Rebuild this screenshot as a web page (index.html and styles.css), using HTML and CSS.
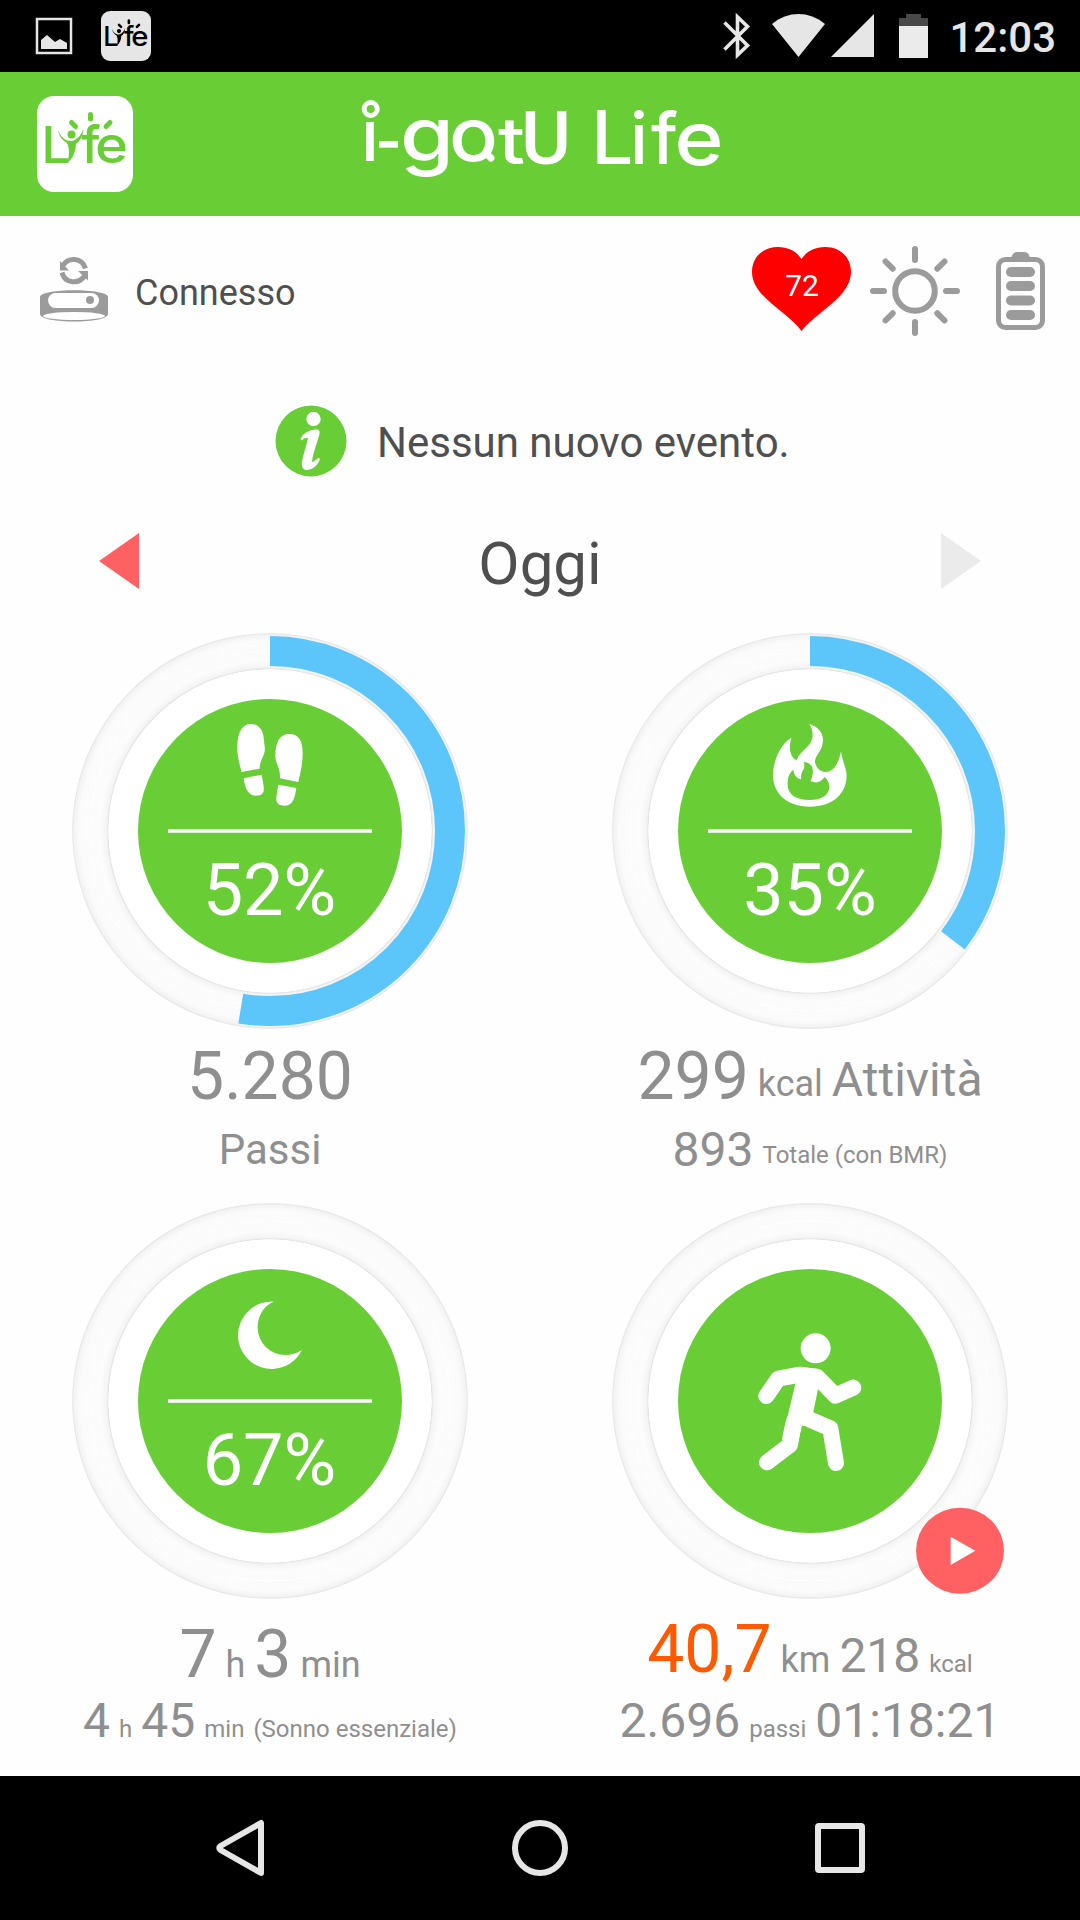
FILE: index.html
```html
<!DOCTYPE html>
<html lang="it">
<head>
    <meta charset="utf-8">
    <title>i-gotU Life</title>
    <link rel="stylesheet" href="styles.css">
</head>
<body>
    <svg class="defs" width="0" height="0">
        <defs>
            <radialGradient id="track" gradientUnits="userSpaceOnUse" cx="198" cy="198" r="198">
                <stop offset="0.814" stop-color="#fefefe"/>
                <stop offset="0.818" stop-color="#e3e3e3"/>
                <stop offset="0.826" stop-color="#f4f4f4"/>
                <stop offset="0.86" stop-color="#fcfcfc"/>
                <stop offset="0.96" stop-color="#fbfbfb"/>
                <stop offset="0.99" stop-color="#f3f3f3"/>
                <stop offset="1" stop-color="#dedede"/>
            </radialGradient>
            <symbol id="life" viewBox="0 0 96 96">
                <g class="life-text">
                    <text x="4.5" y="67" font-size="51">L</text>
                    <text x="44" y="67" font-size="52">f</text>
                    <text x="58" y="67" font-size="51" textLength="33" lengthAdjust="spacingAndGlyphs">e</text>
                </g>
                <circle cx="34.500" cy="38.500" r="4"/>
                <path d="M21 34 C24 42 29 45 35 45 C40 44 44 39 46.500 33 C46 40 43 45 39 48 C38.500 56 36 62 30.500 67 C32 60 33 53 30 47 C25 44 22 40 21 34Z"/>
                <path class="rays" d="M34.500 26.500 L38.500 30.500 M53.500 18.500 V23 M73 26.500 L69 30.500"/>
            </symbol>
        </defs>
    </svg>

    <div class="status-bar">
        <svg width="36" height="36" viewBox="0 0 36 36">
            <rect x="1" y="1" width="34" height="34" fill="none" stroke="#e6e6e6" stroke-width="2.500"/>
            <path d="M5 22 L11 17 L19 24 L24 21 L31 25 V31 H5Z" fill="#e6e6e6"/>
        </svg>
        <div class="life-badge small"><svg width="50" height="50"><use href="#life"/></svg></div>
        <div class="status-right">
            <svg width="27" height="44" viewBox="0 0 27 44" fill="none" stroke="#e6e6e6" stroke-width="3.600">
                <path d="M1.500 8.500 L24.500 31.500 L14.500 41 V3 L24.500 12.500 L1.500 35.500"/>
            </svg>
            <svg class="wifi" width="53" height="44" viewBox="0 0 53 44"><path d="M0 10 C16 -3.300 37 -3.300 53 10 L26.500 43Z" fill="#e6e6e6"/></svg>
            <svg class="signal" width="43" height="44" viewBox="0 0 43 44"><path d="M43 0 V43 H0Z" fill="#e6e6e6"/></svg>
            <svg class="phone-battery" width="29" height="44" viewBox="0 0 29 44">
                <path d="M7 0 H22 V4 H29 V12 H0 V4 H7Z" fill="#484848"/>
                <path d="M0 12 H29 V44 H0Z" fill="#ebebeb"/>
            </svg>
            <span class="clock">12:03</span>
        </div>
    </div>

    <div class="header">
        <div class="life-badge"><svg width="96" height="96"><use href="#life"/></svg></div>
        <svg class="logo" width="370" height="90" viewBox="355 98 370 90" fill="#fff">
            <g class="logo-text">
                <text x="361" y="160.500" font-size="71">i</text>
                <text x="375" y="165.500" font-size="71" textLength="27" lengthAdjust="spacingAndGlyphs">-</text>
                <text x="400" y="160.500" font-size="75" textLength="54" lengthAdjust="spacingAndGlyphs">g</text>
                <text x="449" y="160.500" font-size="75" textLength="49" lengthAdjust="spacingAndGlyphs">o</text>
                <text x="498" y="164" font-size="65" textLength="27" lengthAdjust="spacingAndGlyphs">t</text>
                <text class="narrow" x="521" y="163.500" font-size="75" textLength="50" lengthAdjust="spacingAndGlyphs">U</text>
                <text x="591.500" y="164" font-size="74">L</text>
                <text x="630" y="164" font-size="71">i</text>
                <text x="651" y="164" font-size="71">f</text>
                <text x="674.500" y="164.500" font-size="75" textLength="49" lengthAdjust="spacingAndGlyphs">e</text>
            </g>
            <circle cx="370.700" cy="109" r="6.500" fill="#69ce36" stroke="#fff" stroke-width="5"/>
            <path d="M486 153 L491 158" fill="none" stroke="#fff" stroke-width="7" stroke-linecap="round"/>
        </svg>
    </div>

    <div class="device-row">
        <svg width="68" height="66" viewBox="0 0 68 66">
            <g fill="none" stroke="#9b9b9b" stroke-width="5">
                <path d="M23 8.500 C28 0 42 0 45.500 11.500"/>
                <path d="M22 15.500 C25 27 39 27.500 45 18.500"/>
            </g>
            <path d="M20 4 V13.500 H29Z M48 23.500 V14 H38Z" fill="#9b9b9b"/>
            <path d="M0 40 C0 31 68 31 68 40 V57 C68 67 0 67 0 57Z" fill="#9b9b9b"/>
            <rect x="8" y="36" width="51" height="15" rx="7.500" fill="#fff"/>
            <ellipse cx="34" cy="59" rx="31" ry="4" fill="#fff"/>
            <circle cx="50" cy="43" r="4" fill="#9b9b9b"/>
        </svg>
        <span class="device-state">Connesso</span>
        <svg class="heart" width="99" height="84" viewBox="0 0 99 84">
            <path d="M49.500 84 C36 65 0 50 0 25 C0 10 11 0 26 0 C37 0 45 5 49.500 12 C54 5 62 0 73 0 C88 0 99 10 99 25 C99 50 64 65 49.500 84Z" fill="#f00"/>
            <text x="50" y="49" font-size="30" text-anchor="middle" fill="#fff">72</text>
        </svg>
        <svg class="sun" width="90" height="90" viewBox="0 0 90 90" fill="none" stroke="#9b9b9b" stroke-width="6" stroke-linecap="round">
            <circle cx="45" cy="45" r="19.800"/>
            <path d="M45 3 V14 M45 76 V87 M3 45 H14 M76 45 H87 M15.500 15.500 L22.700 22.700 M67.300 67.300 L74.500 74.500 M15.500 74.500 L22.700 67.300 M67.300 22.700 L74.500 15.500"/>
        </svg>
        <svg class="band-battery" width="49" height="78" viewBox="0 0 49 78" fill="#9b9b9b">
            <path d="M15 8 C15 3 18 0 21 0 H28 C32 0 34 3 34 8Z"/>
            <rect x="2.500" y="7.500" width="44" height="68" rx="7" fill="none" stroke="#9b9b9b" stroke-width="5"/>
            <rect x="10" y="15" width="29" height="10" rx="5"/>
            <rect x="10" y="29" width="29" height="10" rx="5"/>
            <rect x="10" y="43.500" width="29" height="10" rx="5"/>
            <rect x="10" y="58" width="29" height="10" rx="5"/>
        </svg>
    </div>

    <div class="event-row">
        <svg width="72" height="72" viewBox="0 0 72 72">
            <circle cx="36" cy="36" r="35.500" fill="#69ce36"/>
            <circle cx="38.500" cy="14" r="7.200" fill="#fff"/>
            <path d="M25.500 34 C28 28 34 25 41 24.500 C44 24 45 26 44.500 29 C42 38 38 48 37 57 C39 57 41 54 43.500 53 C45 53 45 54 44.500 55.500 C42 61 37 65 31.500 65 C27 64.500 26.500 61 27 57 C28 50 31 42 33 33.500 C30 32 28 35 26.500 35.500Z" fill="#fff"/>
        </svg>
        <span>Nessun nuovo evento.</span>
    </div>

    <div class="day-row">
        <svg width="40" height="56" viewBox="0 0 40 56"><path d="M40 0 V56 L0 28Z" fill="#ff6163"/></svg>
        <span class="day">Oggi</span>
        <svg width="40" height="56" viewBox="0 0 40 56"><path d="M0 0 V56 L40 28Z" fill="#ebebeb"/></svg>
    </div>

    <div class="goals">
        <div class="goal">
            <svg class="ring" width="396" height="396" viewBox="0 0 396 396">
                <circle cx="198" cy="198" r="197.700" fill="url(#track)"/>
                <circle cx="198" cy="198" r="161.500" fill="#fff"/>
                <circle class="edge" cx="198" cy="198" r="180"/>
                <circle class="progress" cx="198" cy="198" r="180" pathLength="100" stroke-dasharray="52.600 100"/>
                <circle class="disc" cx="198" cy="198" r="132"/>
                <g class="icon">
                    <path d="M545 456 C535 420 531 400 532 378 C533 335 548 312 572 312 C600 312 611 335 612 362 C613 375 616 383 614 395 C611 410 600 420 599 446Z"/>
                    <path d="M551 475 L605 464 C610 490 613 505 611 513 C609 524 598 527 587 527 C565 527 555 505 551 475Z"/>
                    <path d="M715 486 L660 475 C662 445 646 430 646 408 C647 365 658 342 690 342 C718 342 729 368 728 402 C728 430 721 460 715 486Z"/>
                    <path d="M655 494 L709 504 C705 535 697 557 676 557 C657 557 648 551 649 535 C650 520 653 508 655 494Z"/>
                </g>
                <path class="divider" d="M96 198 H300"/>
                <text class="percent" x="197.500" y="282">52%</text>
            </svg>
            <div class="values"><span class="big">5.280</span></div>
            <div class="details"><span class="label">Passi</span></div>
        </div>

        <div class="goal">
            <svg class="ring" width="396" height="396" viewBox="0 0 396 396">
                <circle cx="198" cy="198" r="197.700" fill="url(#track)"/>
                <circle cx="198" cy="198" r="161.500" fill="#fff"/>
                <circle class="edge" cx="198" cy="198" r="180"/>
                <circle class="progress" cx="198" cy="198" r="180" pathLength="100" stroke-dasharray="35.400 100"/>
                <circle class="disc" cx="198" cy="198" r="132"/>
                <g class="icon">
                    <path fill-rule="evenodd" d="M628 312 C655 320 670 340 669 362 C667 395 645 405 645 425 C647 440 658 456 678 456 C702 456 718 425 723 394 C727 425 740 445 740 466 C740 520 700 560 630 560 C560 560 519 520 519 466 C520 410 550 365 575 353 C563 385 573 415 590 421 C600 390 638 380 638 345 C638 330 633 320 628 312Z M580 449 C565 460 563 478 563 492 C563 525 590 540 628 540 C665 540 688 525 688 500 C688 488 682 478 674 471 C662 486 650 492 632 483 C640 465 640 450 636 440 C630 430 622 427 611 426 C616 440 612 447 606 456 C603 465 603 470 603 478 C588 474 582 463 580 449Z"/>
                </g>
                <path class="divider" d="M96 198 H300"/>
                <text class="percent" x="198" y="282">35%</text>
            </svg>
            <div class="values">
                <span class="big">299</span>
                <span class="unit raised">kcal</span>
                <span class="medium raised">Attività</span>
            </div>
            <div class="details">
                <span class="medium">893</span>
                <span class="small-unit raised">Totale (con BMR)</span>
            </div>
        </div>

        <div class="goal sleep">
            <svg class="ring" width="396" height="396" viewBox="0 0 396 396">
                <circle cx="198" cy="198" r="197.700" fill="url(#track)"/>
                <circle cx="198" cy="198" r="161.500" fill="#fff"/>
                <circle class="edge" cx="198" cy="198" r="180"/>
                <circle class="disc" cx="198" cy="198" r="132"/>
                <g class="icon">
                    <path d="M641 335 C609 348 593 380 593 412 A83 83 0 0 0 676 495 C695 495 710 490 726 480 A101 101 0 1 1 641 335Z"/>
                </g>
                <path class="divider" d="M96 198 H300"/>
                <text class="percent" x="197.500" y="282">67%</text>
            </svg>
            <div class="values">
                <span class="big">7</span>
                <span class="unit">h</span>
                <span class="big">3</span>
                <span class="unit">min</span>
            </div>
            <div class="details">
                <span class="medium">4</span>
                <span class="small-unit">h</span>
                <span class="medium">45</span>
                <span class="small-unit">min</span>
                <span class="small-unit">(Sonno essenziale)</span>
            </div>
        </div>

        <div class="goal sport">
            <svg class="ring" width="396" height="396" viewBox="0 0 396 396">
                <circle cx="198" cy="198" r="197.700" fill="url(#track)"/>
                <circle cx="198" cy="198" r="161.500" fill="#fff"/>
                <circle class="edge" cx="198" cy="198" r="180"/>
                <circle class="disc" cx="198" cy="198" r="132"/>
                <g class="icon">
                    <circle cx="647" cy="475" r="45"/>
                    <path class="limb" d="M499 618 L535 566 L600 554 L652 561 L706 617 L760 593"/>
                    <path class="limb" d="M582 695 L570 765 L501 817"/>
                    <path class="limb" d="M615 682 L691 715 L708 819"/>
                    <path d="M586 582 L600 531 L658 537 L654 598 L640 666 L625 706 L606 707 L592 765 L546 750 C553 710 558 690 564 675Z"/>
                </g>
                <ellipse cx="348" cy="347.700" rx="44" ry="43" fill="#ff6163"/>
                <path d="M338.700 333.700 V362 L363.300 347.800Z" fill="#fff"/>
            </svg>
            <div class="values">
                <span class="big distance">40,7</span>
                <span class="unit">km</span>
                <span class="medium">218</span>
                <span class="small-unit">kcal</span>
            </div>
            <div class="details">
                <span class="medium">2.696</span>
                <span class="small-unit">passi</span>
                <span class="medium">01:18:21</span>
            </div>
        </div>
    </div>

    <div class="nav-bar">
        <svg width="48" height="58" viewBox="0 0 48 58"><path d="M45 4 V54 L4.500 31 Q2 29 4.500 27Z"/></svg>
        <svg width="58" height="58" viewBox="0 0 58 58"><circle cx="29" cy="29" r="25"/></svg>
        <svg width="50" height="50" viewBox="0 0 50 50"><rect x="3" y="3" width="44" height="44" rx="1"/></svg>
    </div>
</body>
</html>
```
FILE: styles.css
```css
* {
    box-sizing: border-box;
}

body {
    width: 1080px;
    height: 1920px;
    margin: 0;
    display: flex;
    flex-direction: column;
    overflow: hidden;
    background-color: #fefefe;
    color: #4f4f4f;
    font-family: Roboto, sans-serif;
}

svg {
    display: block;
    flex: none;
    overflow: visible;
}

.defs {
    position: absolute;
}

.status-bar {
    display: flex;
    align-items: center;
    height: 72px;
    padding: 0 24px 0 36px;
    background-color: #000000;
}

.status-right {
    display: flex;
    align-items: center;
    margin-left: auto;
}

.wifi {
    margin-left: 22px;
}

.signal {
    margin-left: 6px;
}

.phone-battery {
    margin-left: 25px;
}

.clock {
    margin-left: 21px;
    padding-top: 3px;
    color: #e6e6e6;
    font-size: 42px;
    font-weight: 500;
}

.life-badge {
    width: 96px;
    height: 96px;
    border-radius: 17px;
    background-color: #ffffff;
    color: #69ce36;
    fill: currentColor;
}

.life-badge.small {
    width: 50px;
    height: 50px;
    margin-left: 29px;
    border-radius: 9px;
    background-color: #e6e6e6;
    color: #000000;
}

.life-text {
    font-family: Inter, sans-serif;
    font-weight: 500;
}

.rays {
    fill: none;
    stroke: currentColor;
    stroke-width: 5;
    stroke-linecap: round;
}

.header {
    display: flex;
    align-items: center;
    height: 144px;
    padding-left: 37px;
    background-color: #69ce36;
}

.logo {
    margin-left: 222px;
    margin-top: -2px;
}

.logo-text {
    font-family: Inter, sans-serif;
    font-weight: 500;
}

.logo-text .narrow {
    font-family: Roboto, sans-serif;
}

.device-row {
    display: flex;
    align-items: center;
    height: 146px;
    padding: 2px 35px 0 40px;
}

.device-state {
    margin: 5px auto 0 27px;
    font-size: 36px;
}

.heart {
    margin-bottom: 2px;
}

.sun {
    margin: 2px 36px 0 19px;
}

.band-battery {
    margin-top: 2px;
}

.event-row {
    display: flex;
    align-items: center;
    height: 158px;
    padding-left: 275px;
    font-size: 42px;
}

.event-row span {
    margin-left: 30px;
    padding-top: 3px;
}

.day-row {
    display: flex;
    align-items: center;
    justify-content: space-between;
    height: 82px;
    padding: 0 99px;
    margin-bottom: 31px;
}

.day {
    padding-top: 5px;
    font-size: 60px;
}

.goals {
    display: grid;
    grid-template-columns: 540px 540px;
    grid-auto-rows: 570px;
    flex: 1;
    color: #8f8f8f;
}

.goal {
    display: flex;
    flex-direction: column;
    align-items: center;
}

.edge {
    fill: none;
    stroke: #ffffff;
    stroke-width: 1;
}

.progress {
    fill: none;
    stroke: #5cc6fa;
    stroke-width: 30;
    transform: rotate(-90deg);
    transform-origin: 198px 198px;
}

.disc {
    fill: #69ce36;
}

.icon {
    fill: #ffffff;
    transform: translate(-12px, -13px) scale(0.3333);
}

.limb {
    fill: none;
    stroke: #ffffff;
    stroke-width: 48;
    stroke-linecap: round;
    stroke-linejoin: round;
}

.divider {
    stroke: #ffffff;
    stroke-width: 3.5;
}

.percent {
    fill: #ffffff;
    font-size: 72px;
    text-anchor: middle;
}

.values,
.details {
    display: flex;
    align-items: baseline;
    gap: 9px;
    white-space: nowrap;
}

.values {
    height: 78px;
    margin-top: 9px;
    line-height: 78px;
}

.details {
    height: 56px;
    margin-top: 6px;
    line-height: 56px;
}

.sleep .values {
    margin-top: 17px;
}

.sleep .details {
    margin-top: -1px;
}

.sport .values {
    margin-top: 12px;
}

.sport .details {
    margin-top: 4px;
}

.big {
    font-size: 66px;
}

.medium {
    font-size: 48px;
}

.label {
    font-size: 42px;
}

.unit {
    font-size: 36px;
}

.small-unit {
    font-size: 24px;
}

.raised {
    transform: translateY(-3px);
}

.distance {
    color: #ff5a00;
}

.nav-bar {
    display: grid;
    grid-template-columns: repeat(3, 300px);
    justify-content: center;
    align-items: center;
    justify-items: center;
    height: 144px;
    background-color: #000000;
    fill: none;
    stroke: #e6e6e6;
    stroke-width: 6;
    stroke-linejoin: round;
}
```
